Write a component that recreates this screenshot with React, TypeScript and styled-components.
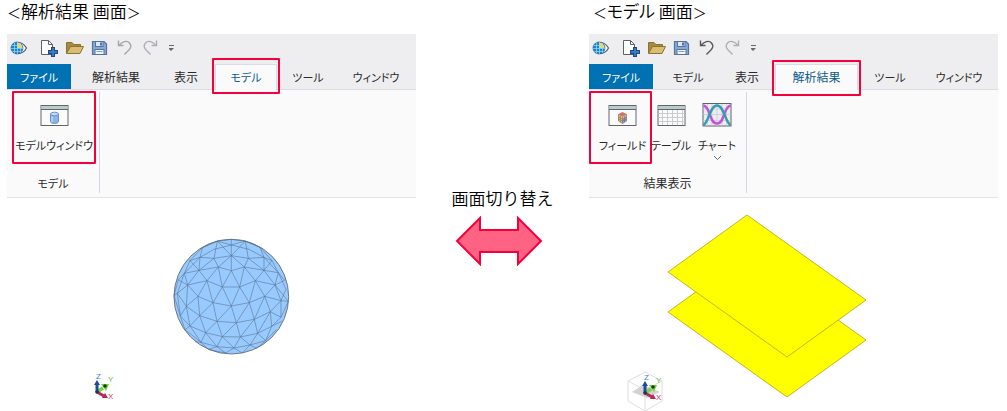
import React from "react";
import styled, { createGlobalStyle, css } from "styled-components";

const GlobalStyle = createGlobalStyle`
  * { box-sizing: border-box; }
  body {
    margin: 0;
    background: #fff;
    color: #000;
    font-family: "Noto Sans CJK JP", sans-serif;
    font-weight: 350;
    font-feature-settings: "palt";
  }
  button { font: inherit; font-feature-settings: inherit; color: inherit; border: 0; padding: 0; background: none; cursor: pointer; }
  svg { display: block; }
`;

const Page = styled.main`
  display: grid;
  grid-template-columns: minmax(0, 1fr) 173px minmax(0, 1fr);
  padding: 0 9px 0 7px;
`;

const Screen = styled.section`
  min-width: 0;
`;

const Title = styled.h2<{ $indent: number }>`
  margin: 0;
  padding-left: ${(p) => p.$indent}px;
  height: 34px;
  font-size: 17px;
  line-height: 22px;
  font-weight: inherit;
  white-space: nowrap;
`;

const Bracket = styled.span`
  font-size: 14px;
`;

const Ribbon = styled.div`
  background: #eeeef1;
  font-size: 12px;
  line-height: 16px;
  font-weight: 400;
  color: #2a2a2a;
`;

const Kana = styled.span`
  font-size: 11px;
`;

const QuickBar = styled.div`
  display: flex;
  align-items: center;
  height: 30px;
  padding: 0 0 2px 2px;
  gap: 6px;
`;

const QuickButton = styled.button`
  flex: none;
`;

const AppIcon = styled.span`
  margin-right: 4px;
`;

const TabStrip = styled.div`
  display: flex;
  height: 26px;
  border-bottom: 1px solid #dcdce6;
`;

const highlight = css`
  border: 2px solid #f5003c;
  border-radius: 1px;
  pointer-events: none;
`;

const Tab = styled.button<{ $width: number; $kind?: "file" | "active"; $markDrop: number }>`
  flex: none;
  width: ${(p) => p.$width}px;
  white-space: nowrap;
  ${(p) => p.$kind === "file" && css`
    background: #0072b3;
    color: #fff;
    margin-right: 4px;
  `}
  ${(p) => p.$kind === "active" && css<{ $markDrop: number }>`
    position: relative;
    height: 26px;
    padding-bottom: 2px;
    background: #fafafb;
    color: #0d5c8c;
    border: 1px solid #dcdce6;
    border-bottom: 0;
    &::after {
      content: "";
      position: absolute;
      inset: ${(q) => q.$markDrop - 7}px -4px ${(q) => -4 - q.$markDrop}px -4px;
      ${highlight}
    }
  `}
`;

const RibbonBody = styled.div`
  display: flex;
  height: 108px;
  padding: 2px 0 4px;
  background: #fafafb;
  border-bottom: 1px solid #e2e2ea;
`;

const Group = styled.div<{ $width: number }>`
  flex: none;
  width: ${(p) => p.$width}px;
  border-right: 1px solid #d6d6e0;
  display: flex;
  flex-direction: column;
`;

const GroupTools = styled.div<{ $indent: number }>`
  display: flex;
  height: 72px;
  padding-left: ${(p) => p.$indent}px;
`;

const GroupLabel = styled.div`
  padding-top: 11px;
  text-align: center;
`;

const Tool = styled.button<{ $width: number; $inset?: number; $marked?: boolean }>`
  position: relative;
  flex: none;
  width: ${(p) => p.$width}px;
  display: flex;
  flex-direction: column;
  align-items: center;
  padding-top: 11px;
  padding-left: ${(p) => p.$inset ?? 0}px;
  gap: 10px;
  white-space: nowrap;
  ${(p) => p.$marked && css`
    &::after {
      content: "";
      position: absolute;
      inset: -1px 0 0;
      ${highlight}
    }
  `}
`;

const Chevron = styled.svg`
  margin-top: -8px;
`;

const Viewport = styled.svg`
  width: 100%;
  height: 213px;
  font-family: "Liberation Sans", sans-serif;
  font-weight: 400;
  font-size: 8px;
`;

const Switch = styled.div`
  display: flex;
  flex-direction: column;
  align-items: center;
  padding-top: 186px;
  font-size: 17px;
  line-height: 24px;
  gap: 6px;
  white-space: nowrap;
  font-feature-settings: normal;
`;

const Arrow = styled.svg`
  margin-right: 8px;
`;

const EyeIcon = () => (
  <svg width="20" height="18" viewBox="0 0 20 18">
    <path d="M9 3.500C13 3.500 16 6.500 17.500 9C16 12 13 14.500 9 14.500" fill="#fff" stroke="#555c66" strokeWidth="1.200" />
    <circle cx="8" cy="9" r="6" fill="#1687d0" />
    <path d="M8 3A6 6 0 0 1 14 9H8Z" fill="#f2dc55" />
    <circle cx="8" cy="9" r="6" fill="none" stroke="#225f98" strokeWidth=".7" />
    <path d="M2.500 6.500H13.500M2 9.500H14M3.500 12.500H12.500M5.500 3.500V14.500M8.500 3V15M11.500 4V14" stroke="#a3d8f5" strokeWidth=".7" />
  </svg>
);

const NewIcon = () => (
  <svg width="20" height="18" viewBox="0 0 20 18">
    <path d="M2.500 1.500H9.500L13.500 5.500V15.500H2.500Z" fill="#fff" stroke="#606065" />
    <path d="M9.500 1.500V5.500H13.500" fill="none" stroke="#606065" />
    <path d="M14 8V18M9 13H19" stroke="#1b4a86" strokeWidth="4" />
    <path d="M14 9V17M10 13H18" stroke="#3c78bd" strokeWidth="2" />
  </svg>
);

const OpenIcon = () => (
  <svg width="20" height="18" viewBox="0 0 20 18">
    <path d="M1.500 14V3.500H7L9 5.500H15.500V8" fill="#a58a40" stroke="#8b7334" />
    <path d="M1.500 14.500L5.500 7.500H18.500L15 14.500Z" fill="#d9bd72" stroke="#8b7334" />
  </svg>
);

const SaveIcon = () => (
  <svg width="20" height="18" viewBox="0 0 20 18">
    <path d="M1.500 2.500H13L15.500 5V15.500H1.500Z" fill="#86a9dc" stroke="#56739b" strokeWidth="1.200" />
    <rect x="4.500" y="2.500" width="7.500" height="5" fill="#dbe7f7" stroke="#56739b" />
    <rect x="9" y="3.500" width="2" height="3" fill="#56739b" />
    <rect x="4" y="10.500" width="9" height="5" fill="#f1f5fb" stroke="#56739b" />
    <path d="M5.500 12.500H11.500" stroke="#8b9cb6" />
  </svg>
);

const UndoIcon = ({ color, flip }: { color: string; flip?: boolean }) => (
  <svg width="20" height="18" viewBox="0 0 20 18">
    <g transform={flip ? "translate(15 0) scale(-1 1)" : undefined} fill="none" stroke={color} strokeWidth="1.400">
      <path d="M1.500 1.500V6.500H6.500" />
      <path d="M2 6.500C5 2.500 10 1 12.500 4C16 8 12 11 7.500 15.500" />
    </g>
  </svg>
);

const MoreIcon = () => (
  <svg width="6" height="18" viewBox="4 0 6 18">
    <path d="M3 6.500H9" stroke="#66666c" />
    <path d="M3 9H9L6 12Z" fill="#66666c" />
  </svg>
);

const Frame = () => (
  <>
    <rect x="1" y="2.500" width="27" height="20" fill="#fbfbfc" stroke="#62666b" />
    <rect x="1.500" y="3" width="26" height="3" fill="#b9cccc" />
    <path d="M1 6.500H28" stroke="#62666b" />
  </>
);

const ModelIcon = () => (
  <svg width="29" height="24" viewBox="0 0 29 24">
    <Frame />
    <path d="M10.500 11V18.500C10.500 21 18.500 21 18.500 18.500V11Z" fill="#8db3ec" stroke="#6e8fc4" />
    <ellipse cx="14.500" cy="11" rx="4" ry="1.800" fill="#c3daf8" stroke="#6e8fc4" />
    <path d="M12 13.500V19" stroke="#bfd6f8" strokeWidth="1.500" />
  </svg>
);

const FieldIcon = () => (
  <svg width="29" height="24" viewBox="0 0 29 24">
    <Frame />
    <path d="M10.500 11.500L14.500 9.500L18.500 11.500V18L14.500 20.500L10.500 18Z" fill="#e7ba70" stroke="#776a65" strokeWidth=".7" />
    <path d="M10.500 11.500L14.500 9.500L18.500 11.500L14.500 13.500Z" fill="#e46c64" />
    <path d="M14.500 16L18.500 14V18L14.500 20.500Z" fill="#7d9ad6" />
    <path d="M10.500 14L14.500 16L18.500 14M10.500 16L14.500 18L18.500 16M14.500 13.500V20.500M12.500 12.500V19M16.500 12.500V19" fill="none" stroke="#776a65" strokeWidth=".5" />
  </svg>
);

const TableIcon = () => (
  <svg width="29" height="24" viewBox="0 0 29 24">
    <Frame />
    <path d="M1.500 10.500H27.500M1.500 14.500H27.500M1.500 18.500H27.500M5.500 7V22M10.500 7V22M15.500 7V22M20.500 7V22M25.500 7V22" stroke="#c9cdd0" />
  </svg>
);

const ChartIcon = () => (
  <svg width="30" height="24" viewBox="0 0 30 24">
    <rect x="1" y=".5" width="28" height="22.500" fill="#ececf2" stroke="#5f6368" />
    <path d="M5.500 1V23M10 1V23M15 1V23M20 1V23M24.500 1V23M1 6H29M1 11.500H29M1 17.500H29" stroke="#c9c9d5" strokeWidth=".7" />
    <path d="M1.500 2.500C9 4 7 20.500 15 20.500S21 4 28.500 2.500" fill="none" stroke="#c452d8" strokeWidth="2.400" />
    <path d="M1.500 22C7 19 8 2.500 15 2.500S23 19 28.500 22" fill="none" stroke="#329fae" strokeWidth="2.400" />
  </svg>
);

const QuickAccess = ({ undoColor }: { undoColor: string }) => (
  <QuickBar>
    <AppIcon><EyeIcon /></AppIcon>
    <QuickButton aria-label="新規"><NewIcon /></QuickButton>
    <QuickButton aria-label="開く"><OpenIcon /></QuickButton>
    <QuickButton aria-label="保存"><SaveIcon /></QuickButton>
    <QuickButton aria-label="元に戻す"><UndoIcon color={undoColor} /></QuickButton>
    <QuickButton aria-label="やり直し"><UndoIcon color="#aeaeb4" flip /></QuickButton>
    <QuickButton aria-label="その他"><MoreIcon /></QuickButton>
  </QuickBar>
);

type TabSpec = { label: string; width: number; kana?: boolean; kind?: "file" | "active" };

const Tabs = ({ items, markDrop = 0 }: { items: TabSpec[]; markDrop?: number }) => (
  <TabStrip role="tablist">
    {items.map((t) => (
      <Tab key={t.label} role="tab" aria-selected={t.kind === "active"} $width={t.width} $kind={t.kind} $markDrop={markDrop}>
        {t.kana ? <Kana>{t.label}</Kana> : t.label}
      </Tab>
    ))}
  </TabStrip>
);

const leftTabs: TabSpec[] = [
  { label: "ファイル", width: 64, kana: true, kind: "file" },
  { label: "解析結果", width: 82 },
  { label: "表示", width: 58 },
  { label: "モデル", width: 62, kana: true, kind: "active" },
  { label: "ツール", width: 62, kana: true },
  { label: "ウィンドウ", width: 74, kana: true },
];

const rightTabs: TabSpec[] = [
  { label: "ファイル", width: 64, kana: true, kind: "file" },
  { label: "モデル", width: 62, kana: true },
  { label: "表示", width: 56 },
  { label: "解析結果", width: 83, kind: "active" },
  { label: "ツール", width: 64, kana: true },
  { label: "ウィンドウ", width: 74, kana: true },
];

const Triad = () => (
  <g>
    <path d="M0 0L6 -4" stroke="#74d33e" strokeWidth="3.500" />
    <path d="M4 -8L12 -8L9 -1Z" fill="#74d33e" />
    <circle cx="8" cy="-6" r="1.800" fill="#173c12" />
    <path d="M0 0L7 4" stroke="#b8285a" strokeWidth="3" />
    <path d="M5 6L8 1L11 6Z" fill="#b8285a" />
    <path d="M0 0V-8" stroke="#1d4da0" strokeWidth="3" />
    <path d="M-3 -7L0 -12L3 -7Z" fill="#1d4da0" />
    <circle r="1.800" fill="#243156" />
    <text x="-1" y="-13" fill="#3f7ad6">Z</text>
    <text x="11" y="-10" fill="#5cc62a">Y</text>
    <text x="11" y="7" fill="#d0346c">X</text>
  </g>
);

/* Mesh edges of the sphere, on a 398-unit grid drawn at one third scale. */
const meshLines = [
  "157,33 199,45 241,33",
  "157,33 199,28 241,33",
  "110,54 157,33 147,85 199,77 250,85 241,33 290,54",
  "157,33 113,52 105,82 147,85 160,111 199,77 238,111 250,85 297,82 285,52 241,33",
  "199,45 147,58 105,82 75,92 113,52",
  "199,45 252,58 297,82 321,92 285,52",
  "199,28 199,45 199,77 199,122",
  "157,33 199,77 241,33",
  "105,82 102,121 160,111",
  "297,82 297,121 238,111",
  "147,85 102,121",
  "250,85 297,121",
  "160,111 199,122 238,111",
  "75,92 102,121",
  "321,92 297,121",
  "75,92 58,130 102,121 126,152 160,111 172,171 199,122 224,171 238,111 271,152 297,121 340,128 321,92",
  "105,82 58,130 68,165 102,121",
  "297,82 340,128 330,165 297,121",
  "58,130 40,150 68,165 126,152 172,171 224,171 271,152 330,165 359,151 340,128",
  "68,165 99,199 126,152 144,218 172,171 199,228 224,171 253,218 271,152 299,199 330,165 348,212",
  "58,130 37,190",
  "40,150 27,196 37,190 68,165",
  "37,190 64,229 99,199 144,218 199,228 253,218 299,199 348,212 370,214",
  "68,165 64,229 104,257 99,199",
  "340,128 363,178 348,212",
  "330,165 370,214",
  "104,257 144,218 156,274 199,228 214,278 253,218 268,268 299,199 316,245 348,212 348,262 370,214",
  "27,196 46,258 64,229 75,288 104,257 156,274 214,278 268,268 316,245 348,262",
  "37,190 46,258 75,288 122,308 104,257",
  "122,308 156,274 172,320 214,278 226,321 268,268 278,310 316,245 320,289 348,262",
  "46,258 60,299 75,288 108,337 122,308 172,320 226,321 278,310 320,289 350,274",
  "60,299 108,337 156,350 122,308",
  "156,350 172,320 207,354 226,321 255,345 278,310 302,332 320,289",
  "90,335 108,337 130,358 156,350 207,354 255,345 302,332 334,299",
  "130,358 182,369 156,350",
  "182,369 207,354 232,369 255,345 275,355 302,332",
].map((points) => <polyline key={points} points={points} />);

const SphereView = () => (
  <Viewport viewBox="0 0 409 213" role="img" aria-label="モデル">
    <g transform="translate(158 32) scale(.3333)" stroke="#55718f" strokeWidth="1.700" fill="none" strokeLinejoin="round">
      <circle cx="199" cy="200" r="172" fill="#99caff" stroke="#6b7683" strokeWidth="3" />
      {meshLines}
    </g>
    <g transform="translate(90 194)"><Triad /></g>
  </Viewport>
);

const PlatesView = () => (
  <Viewport viewBox="0 0 409 213" role="img" aria-label="解析結果">
    <g fill="#ff0" stroke="#c6b22a">
      <path d="M79 114L158 57L277 142L198 199Z" />
      <path d="M79 74L158 17L277 102L198 159Z" />
    </g>
    <g fill="none" stroke="#dedede">
      <path d="M56 174L73 183V203L56 213L39 203V183Z" />
      <path d="M39 183L56 192L73 183M56 192V213" />
      <path d="M43 194L54 187L71 194L58 200Z" fill="#d2d2d2" stroke="none" />
    </g>
    <g transform="translate(56 195)"><Triad /></g>
  </Viewport>
);

export default function App() {
  return (
    <>
      <GlobalStyle />
      <Page>
        <Screen>
          <Title $indent={0}><Bracket>＜</Bracket>解析結果 画面<Bracket>＞</Bracket></Title>
          <Ribbon>
            <QuickAccess undoColor="#a5a5ab" />
            <Tabs items={leftTabs} />
            <RibbonBody>
              <Group $width={93}>
                <GroupTools $indent={5}>
                  <Tool $width={84} $marked><ModelIcon /><Kana>モデルウィンドウ</Kana></Tool>
                </GroupTools>
                <GroupLabel><Kana>モデル</Kana></GroupLabel>
              </Group>
            </RibbonBody>
          </Ribbon>
          <SphereView />
        </Screen>
        <Switch>
          画面切り替え
          <Arrow width="88" height="50" viewBox="0 0 88 50">
            <path d="M2 25L25 2V14H63V2L86 25L63 48V36H25V48Z" fill="#ff6384" stroke="#f5003c" strokeWidth="2" />
          </Arrow>
        </Switch>
        <Screen>
          <Title $indent={4}><Bracket>＜</Bracket>モデル 画面<Bracket>＞</Bracket></Title>
          <Ribbon>
            <QuickAccess undoColor="#55555b" />
            <Tabs items={rightTabs} markDrop={2} />
            <RibbonBody>
              <Group $width={158}>
                <GroupTools $indent={0}>
                  <Tool $width={63} $inset={4} $marked><FieldIcon /><Kana>フィールド</Kana></Tool>
                  <Tool $width={38}><TableIcon /><Kana>テーブル</Kana></Tool>
                  <Tool $width={54}>
                    <ChartIcon /><Kana>チャート</Kana>
                    <Chevron width="9" height="6" viewBox="0 0 9 6"><path d="M1 1L4.500 4.500L8 1" fill="none" stroke="#66666c" /></Chevron>
                  </Tool>
                </GroupTools>
                <GroupLabel>結果表示</GroupLabel>
              </Group>
            </RibbonBody>
          </Ribbon>
          <PlatesView />
        </Screen>
      </Page>
    </>
  );
}
